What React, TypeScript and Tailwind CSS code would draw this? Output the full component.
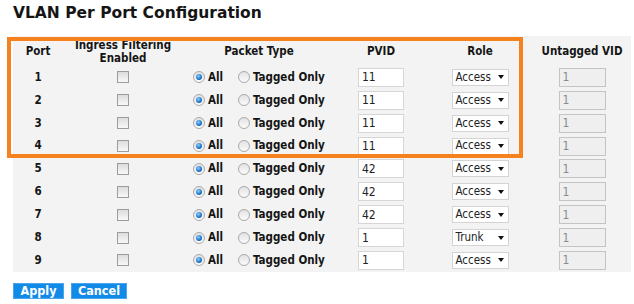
import React from "react";

const rows = [
  { port: 1, pvid: "11", role: "Access" },
  { port: 2, pvid: "11", role: "Access" },
  { port: 3, pvid: "11", role: "Access" },
  { port: 4, pvid: "11", role: "Access" },
  { port: 5, pvid: "42", role: "Access" },
  { port: 6, pvid: "42", role: "Access" },
  { port: 7, pvid: "42", role: "Access" },
  { port: 8, pvid: "1", role: "Trunk" },
  { port: 9, pvid: "1", role: "Access" },
];

const cols = "grid grid-cols-[50px_120px_152px_92px_106px_98px]";

function Checkbox() {
  return (
    <span className="block h-[12px] w-[12px] border border-[#9c9c9c] bg-[linear-gradient(#dcdcdc,#f8f8f8)]" />
  );
}

function Radio({ checked }: { checked?: boolean }) {
  return (
    <span className="flex h-[12px] w-[12px] items-center justify-center rounded-full border border-[#a9a9a9] bg-[linear-gradient(#e2e2e2,#fbfbfb)]">
      {checked && (
        <span className="block h-[6px] w-[6px] rounded-full bg-[radial-gradient(circle_at_40%_35%,#8fd0ff,#1069c0_65%)]" />
      )}
    </span>
  );
}

function Select({ value }: { value: string }) {
  return (
    <div className="flex h-[17px] w-[57px] items-center justify-between border border-[#d4d4d4] bg-white pl-[3px] pr-[4px] font-normal text-[11.5px] text-[#222]">
      <span>{value}</span>
      <span className="h-0 w-0 border-x-[3.5px] border-t-[4px] border-x-transparent border-t-[#111]" />
    </div>
  );
}

export default function App() {
  return (
    <div
      className="h-[304px] w-[634px] bg-white text-[#151515]"
      style={{ fontFamily: '"DejaVu Sans Condensed", "DejaVu Sans", sans-serif' }}
    >
      <h1
        className="pl-[13px] pt-[3px] text-[15.5px] leading-[20px] font-bold"
        style={{ fontFamily: '"DejaVu Sans", sans-serif' }}
      >
        VLAN Per Port Configuration
      </h1>

      <div className="relative ml-[13px] mt-[13px] w-[618px] bg-[#f3f3f3] text-[11.5px] font-bold">
        <div className={`${cols} h-[30px] items-center pt-[1px] text-center leading-[13px]`}>
          <div>Port</div>
          <div>
            Ingress Filtering
            <br />
            Enabled
          </div>
          <div>Packet Type</div>
          <div>PVID</div>
          <div>Role</div>
          <div>Untagged VID</div>
        </div>

        {rows.map((r) => (
          <div key={r.port} className={`${cols} h-[22.875px] items-center`}>
            <div className="text-center">{r.port}</div>
            <div className="flex justify-center">
              <Checkbox />
            </div>
            <div className="flex items-center pl-[10px]">
              <label className="flex w-[45px] items-center gap-[3px]">
                <Radio checked />
                <span>All</span>
              </label>
              <label className="flex items-center gap-[3px]">
                <Radio />
                <span>Tagged Only</span>
              </label>
            </div>
            <div className="flex justify-center">
              <div className="flex h-[19px] w-[46px] items-center border border-[#d6d6d6] bg-white pl-[3px] font-normal text-[12px] text-[#222]">
                {r.pvid}
              </div>
            </div>
            <div className="flex justify-center">
              <Select value={r.role} />
            </div>
            <div className="flex justify-center">
              <div className="flex h-[19px] w-[47px] items-center border border-[#c4c4c4] bg-[#efefef] pl-[3px] font-normal text-[12px] text-[#8a8a8a]">
                1
              </div>
            </div>
          </div>
        ))}

        <div className="pointer-events-none absolute left-[-6px] top-[1px] h-[121px] w-[516px] border-4 border-[#f6821f]" />
      </div>

      <div className="ml-[13px] mt-[11px] flex gap-[7px] text-[12.5px] font-bold text-white">
        <button className="h-[16px] w-[51px] border border-[#4aa6ec] bg-[#128be8] leading-[14px]">
          Apply
        </button>
        <button className="h-[16px] w-[56px] border border-[#4aa6ec] bg-[#128be8] leading-[14px]">
          Cancel
        </button>
      </div>
    </div>
  );
}
